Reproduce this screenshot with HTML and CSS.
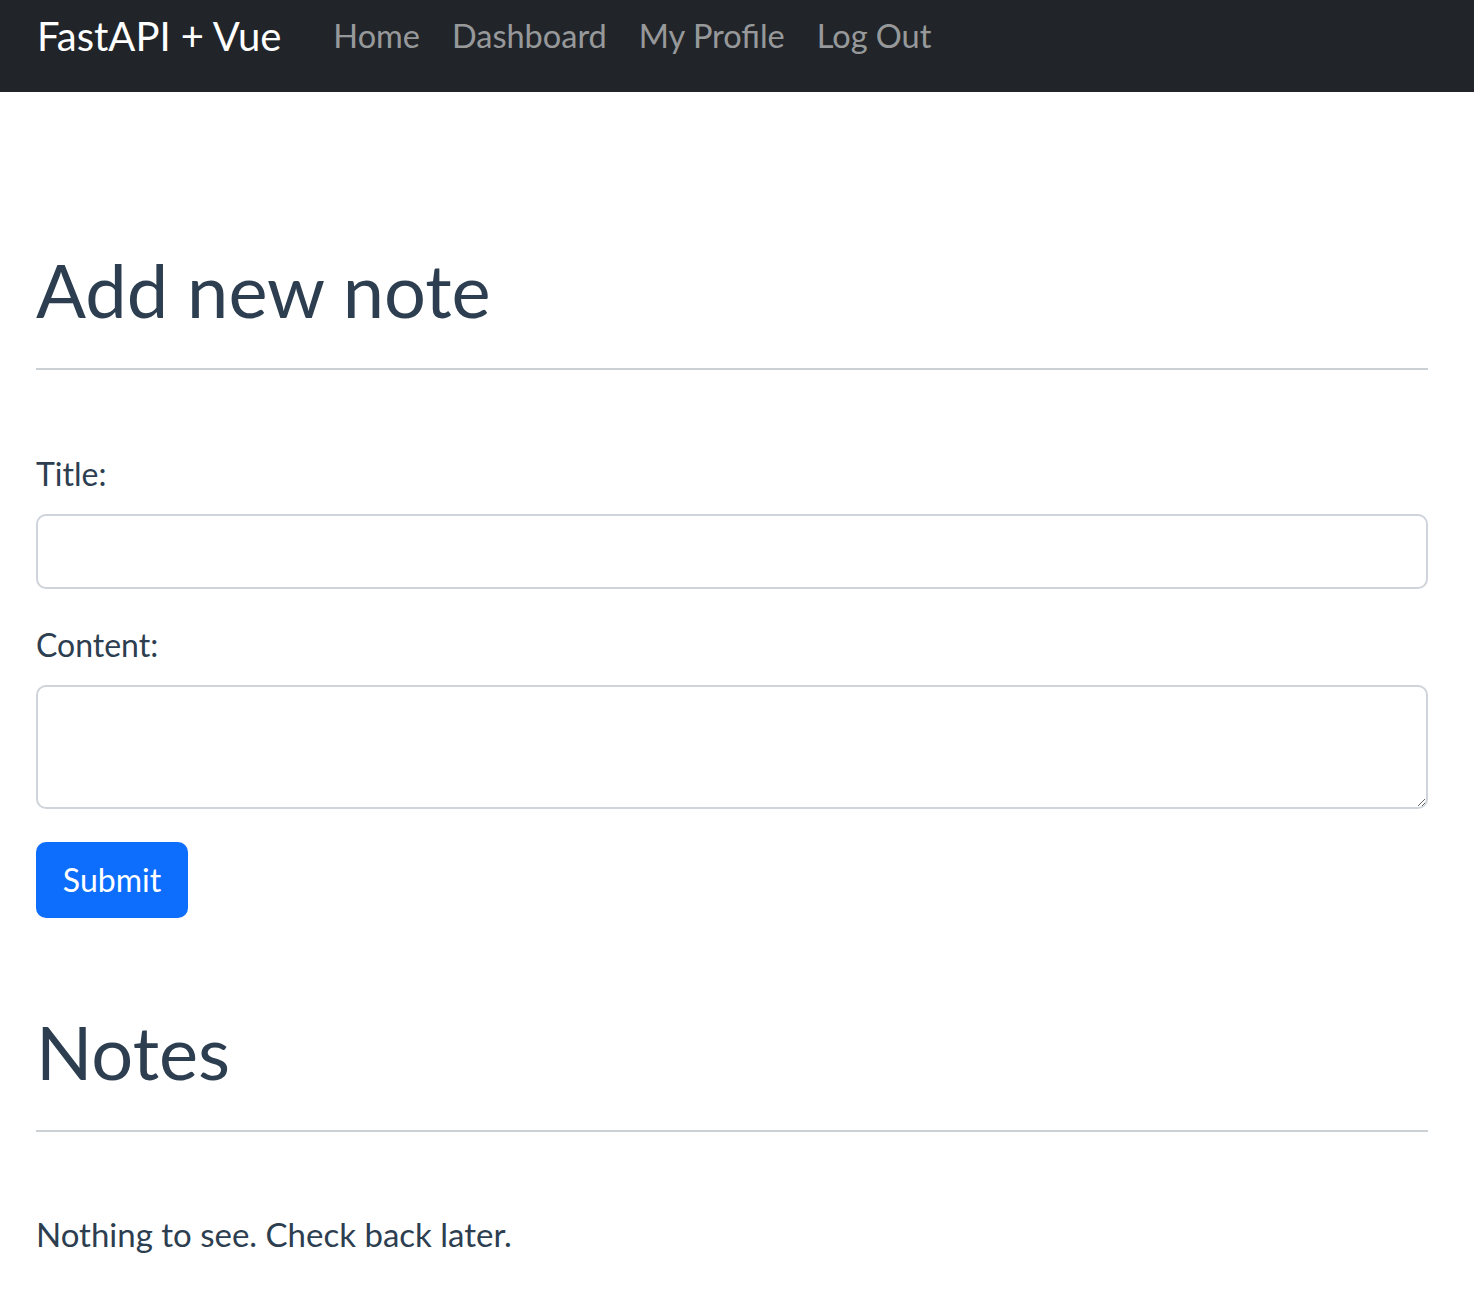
FILE: index.html
```html
<!DOCTYPE html>
<html lang="en">
<head>
<meta charset="utf-8">
<title>FastAPI + Vue</title>
<link rel="stylesheet" href="styles.css">
</head>
<body>
<header class="navbar">
  <a class="brand" href="#">FastAPI + Vue</a>
  <nav class="nav">
    <a class="nav-link" href="#">Home</a>
    <a class="nav-link" href="#">Dashboard</a>
    <a class="nav-link" href="#">My Profile</a>
    <a class="nav-link" href="#">Log Out</a>
  </nav>
</header>
<main class="container">
  <section class="add-note">
    <h1 class="heading">Add new note</h1>
    <hr class="rule">
    <form class="form">
      <div class="field">
        <label class="label" for="title">Title:</label>
        <input class="control" id="title" type="text">
      </div>
      <div class="field">
        <label class="label" for="content">Content:</label>
        <textarea class="control textarea" id="content"></textarea>
      </div>
      <button class="btn" type="button">Submit</button>
    </form>
  </section>
  <section class="notes">
    <h1 class="heading">Notes</h1>
    <hr class="rule rule-notes">
    <p class="empty">Nothing to see. Check back later.</p>
  </section>
</main>
</body>
</html>
```
FILE: styles.css
```css
* { box-sizing: border-box; }
html, body { margin: 0; padding: 0; }
body {
  font-family: Lato, "Open Sans", sans-serif;
  font-size: 32px;
  line-height: 1.5;
  color: #2c3e50;
  background: #fff;
}
.navbar {
  height: 92px;
  background: #212529;
  display: flex;
  align-items: center;
  padding: 0 36px 20px 37px;
}
.brand {
  color: #fff;
  text-decoration: none;
  font-size: 40px;
  margin-right: 36px;
}
.nav { display: flex; }
.nav-link {
  color: rgba(255,255,255,.55);
  text-decoration: none;
  font-size: 32.5px;
  padding: 0 16px;
}
.container {
  padding: 0 46px 0 36px;
  display: flex;
  flex-direction: column;
}
.add-note { padding-top: 150px; }
.heading {
  margin: 0;
  font-size: 74px;
  font-weight: 400;
  line-height: 96px;
}
.rule {
  margin: 30px 0 80px;
  border: 0;
  border-top: 2px solid #cbd0d4;
  width: 1392px;
}
.rule-notes { margin-bottom: 64px; }
.form { display: flex; flex-direction: column; }
.field { display: flex; flex-direction: column; margin-bottom: 32px; width: 1392px; }
.label { margin-bottom: 16px; }
.control {
  height: 75px;
  border: 2px solid #ced4da;
  border-radius: 10px;
  font: inherit;
  padding: 12px 24px;
  background: #fff;
}
.textarea { height: 124px; resize: vertical; }
.btn {
  align-self: flex-start;
  width: 152px;
  height: 76px;
  background: #0d6efd;
  color: #fff;
  border: 0;
  border-radius: 10px;
  font: inherit;
  padding: 0;
  margin-top: 1px;
}
.notes { padding-top: 86px; }
.empty { margin: 78px 0 0; font-size: 33px; }
```
